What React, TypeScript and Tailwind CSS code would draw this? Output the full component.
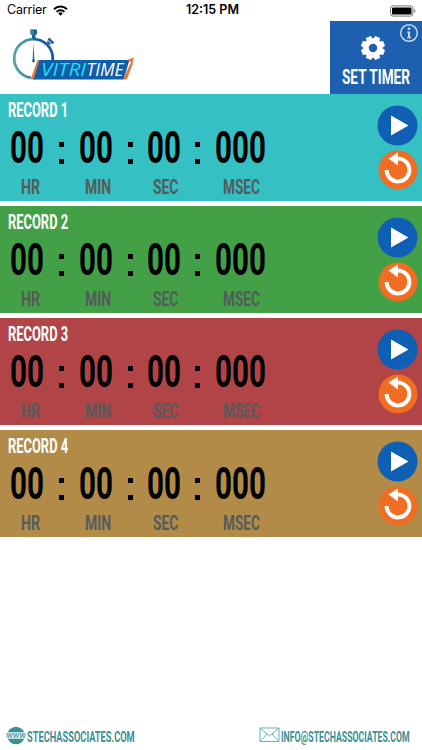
import { useLayoutEffect, useRef, useState } from "react";

type FitTextProps = {
  text: string;
  className: string;
};

// Squeezes a line of text horizontally until it fills its box
function FitText({ text, className }: FitTextProps) {
  const box = useRef<HTMLDivElement>(null);
  const line = useRef<HTMLSpanElement>(null);
  const [scale, setScale] = useState(1);

  useLayoutEffect(() => {
    if (box.current && line.current) {
      setScale(box.current.clientWidth / line.current.offsetWidth);
    }
  }, [text]);

  return (
    <div
      ref={box}
      className={`shrink-0 whitespace-nowrap font-['Roboto',sans-serif] leading-none ${className}`}
    >
      <span
        ref={line}
        className="inline-block origin-left"
        style={{ transform: `scaleX(${scale})` }}
      >
        {text}
      </span>
    </div>
  );
}

const records = [
  { name: "RECORD 1", color: "bg-[#35c1c3]" },
  { name: "RECORD 2", color: "bg-[#43a047]" },
  { name: "RECORD 3", color: "bg-[#b04446]" },
  { name: "RECORD 4", color: "bg-[#b28b48]" },
];

function Logo() {
  return (
    <svg width="126" height="54" viewBox="0 0 126 54" className="mt-[7px] ml-[10px]">
      <defs>
        <linearGradient id="ring" x1="0" x2="1">
          <stop offset="0" stopColor="#55a5a5" />
          <stop offset="0.48" stopColor="#3a8aa0" />
          <stop offset="0.54" stopColor="#17619f" />
          <stop offset="1" stopColor="#155a9e" />
        </linearGradient>
      </defs>
      <circle cx="23.5" cy="30.5" r="19.3" fill="none" stroke="url(#ring)" strokeWidth="2.8" />
      <path d="M20.5 1.5h6.5v5h-6.5zM22 6h3.5v5h-3.5z" fill="#1d6290" />
      <path d="M20.5 1.5h3v5h-3z" fill="#3d8c9c" />
      <path d="M38.5 10.5l4.8 4.8" stroke="#1c61a0" strokeWidth="2.6" />
      <path d="M37.3 13l3.4 3.4" stroke="#1c61a0" strokeWidth="1.4" />
      <path d="M36.5 17l2.2-2.5" stroke="#1c61a0" strokeWidth="2" />
      <path d="M23.5 15l0.9 17h-1.8z" fill="#2c6285" />
      <circle cx="23.5" cy="33" r="1.4" fill="#2c6285" />
      <path d="M28 32.5h92l-6 19H20z" fill="#fff" />
      <path d="M27.5 32h4l-6 19.5h-5z" fill="#e5783b" />
      <path d="M29.5 32h90l-6 19.5H23.5z" fill="#0f5ea9" />
      <path d="M120.5 35l2.3.5-6 16h-3.8z" fill="#e5783b" />
      <path d="M117 32l7-2.6-1.8 7-1.7-2.5z" fill="#e5783b" />
      <g fontFamily="'Open Sans', sans-serif" fontSize="17.5" fontStyle="italic">
        <text x="31" y="48" textLength="45" lengthAdjust="spacingAndGlyphs" fill="#24dcf2">
          VITRI
        </text>
        <text x="76.5" y="48" textLength="37" lengthAdjust="spacingAndGlyphs" fill="#fff">
          TIME
        </text>
      </g>
    </svg>
  );
}

function StatusBar() {
  return (
    <div className="grid h-[21px] grid-cols-3 items-center font-['Inter',sans-serif] text-[12.5px] leading-none text-black">
      <div className="flex items-center gap-[6px] pl-[7px]">
        <span className="tracking-[-0.2px]">Carrier</span>
        <svg width="15" height="11" viewBox="0 0 15 11">
          <path d="M1 4.2a9.2 9.2 0 0 1 13 0" fill="none" stroke="#000" strokeWidth="2.1" />
          <path d="M3.6 6.8a5.5 5.5 0 0 1 7.8 0" fill="none" stroke="#000" strokeWidth="1.9" />
          <path d="M5.3 8.4a3.1 3.1 0 0 1 4.4 0L7.5 10.7z" />
        </svg>
      </div>
      <span className="pl-[3px] text-center font-semibold">12:15 PM</span>
      <svg width="28" height="12" viewBox="0 0 28 12" className="mr-[5px] justify-self-end">
        <rect x="1.5" y="0.9" width="22.5" height="10.2" rx="2.6" fill="#fff" stroke="#777" />
        <rect x="3" y="2.4" width="19.5" height="7.2" rx="1.2" />
        <path d="M25.3 4.1q2.4 1.9 0 3.8z" fill="#777" />
      </svg>
    </div>
  );
}

function Gear() {
  return (
    <svg width="26" height="26" viewBox="-13 -13 26 26" fill="#fff">
      <circle r="6.9" fill="none" stroke="#fff" strokeWidth="5.4" />
      {[0, 45, 90, 135, 180, 225, 270, 315].map((angle) => (
        <path
          key={angle}
          d="M-3.4 -8.5L-2.6 -12H2.6L3.4 -8.5z"
          transform={`rotate(${angle + 22.5})`}
        />
      ))}
    </svg>
  );
}

function Colon() {
  return (
    <div className="mt-[15px] flex h-[22px] w-[5px] shrink-0 flex-col justify-between">
      <span className="h-[5px] bg-black" />
      <span className="h-[5px] bg-black" />
    </div>
  );
}

function Record({ name, color }: { name: string; color: string }) {
  return (
    <section className={`flex h-[107px] justify-between ${color}`}>
      <div className="pt-[6px]">
        <FitText
          text={name}
          className="ml-[8px] h-5 w-[60px] text-[20px] font-bold text-white"
        />
        <div className="mt-[7px] flex h-[44px] items-start text-[43.5px] font-bold text-black">
          <FitText text="00" className="mr-[15px] ml-[10px] w-[34px]" />
          <Colon />
          <FitText text="00" className="mr-[15px] ml-[14.5px] w-[34px]" />
          <Colon />
          <FitText text="00" className="mr-[14px] ml-[14.5px] w-[34px]" />
          <Colon />
          <FitText text="000" className="ml-[15px] w-[51px]" />
        </div>
        <div className="mt-[6px] flex text-[21px] font-bold text-[#555b5b]">
          <FitText text="HR" className="ml-[21px] w-[19px]" />
          <FitText text="MIN" className="ml-[45px] w-[26px]" />
          <FitText text="SEC" className="ml-[42px] w-[25px]" />
          <FitText text="MSEC" className="ml-[45px] w-[37px]" />
        </div>
      </div>
      <div className="mt-[11px] mr-[4px] flex flex-col items-center gap-[4px]">
        <svg width="41" height="41" viewBox="0 0 41 41">
          <circle cx="20.5" cy="20.5" r="20" fill="#0f5fb4" />
          <path d="M14 10.5L31.5 20.5L14 30.5z" fill="#fff" />
        </svg>
        <svg width="40" height="40" viewBox="0 0 40 40">
          <circle cx="20" cy="20" r="19.5" fill="#f06d22" />
          <path
            d="M17 9A11.4 11.4 0 1 1 8.6 20"
            fill="none"
            stroke="#fff"
            strokeWidth="4"
          />
          <path d="M10.5 8.5L20 2.5v13z" fill="#fff" />
        </svg>
      </div>
    </section>
  );
}

export default function App() {
  return (
    <div className="flex h-[750px] w-[422px] flex-col overflow-hidden bg-white">
      <StatusBar />
      <header className="flex h-[73px] justify-between">
        <Logo />
        <div className="relative flex w-[92px] flex-col items-center bg-[#1e5fb0] pt-[14px]">
          <div className="mr-[7px]">
            <Gear />
          </div>
          <FitText
            text="SET TIMER"
            className="mt-[6px] w-[68px] text-[20px] font-bold text-white"
          />
          <svg width="20" height="20" viewBox="0 0 20 20" className="absolute top-[2px] right-[3px]">
            <circle cx="10" cy="10" r="8.3" fill="none" stroke="#c6dcf2" strokeWidth="1.5" />
            <circle cx="10" cy="5.8" r="1.4" fill="#c6dcf2" />
            <path d="M8 8.5h3.1v5.6h1v1.2H8v-1.2h1V9.7H8z" fill="#c6dcf2" />
          </svg>
        </div>
      </header>
      <main className="flex flex-col gap-[5px]">
        {records.map((record) => (
          <Record key={record.name} name={record.name} color={record.color} />
        ))}
      </main>
      <footer className="mt-auto flex h-[24px] items-start justify-between pr-[12px] pl-[6px] text-[15px] font-bold text-[#3b8f96]">
        <div className="flex">
          <svg width="20" height="20" viewBox="0 0 20 20">
            <circle cx="10" cy="9.5" r="8.8" fill="#3b8f96" />
            <rect x="0" y="6.2" width="20" height="6.6" fill="#e4f0f1" />
            <text
              x="0.3"
              y="11.8"
              textLength="19.4"
              lengthAdjust="spacingAndGlyphs"
              fontFamily="Roboto, sans-serif"
              fontSize="9"
              fontWeight="400"
              fill="#3b8f96"
            >
              www
            </text>
          </svg>
          <FitText text="STECHASSOCIATES.COM" className="mt-[4px] ml-[0.5px] w-[107.5px]" />
        </div>
        <div className="flex">
          <svg width="21" height="16" viewBox="0 0 21 16" className="mt-[1px]">
            <path
              d="M1 1h19v13.5H1zM1 1l9.5 8L20 1M1 14.5l7-7.5M20 14.5L13 7"
              fill="none"
              stroke="#6aaeb3"
              strokeWidth="1"
            />
          </svg>
          <FitText text="INFO@STECHASSOCIATES.COM" className="mt-[4px] ml-[1px] w-[129px]" />
        </div>
      </footer>
    </div>
  );
}
